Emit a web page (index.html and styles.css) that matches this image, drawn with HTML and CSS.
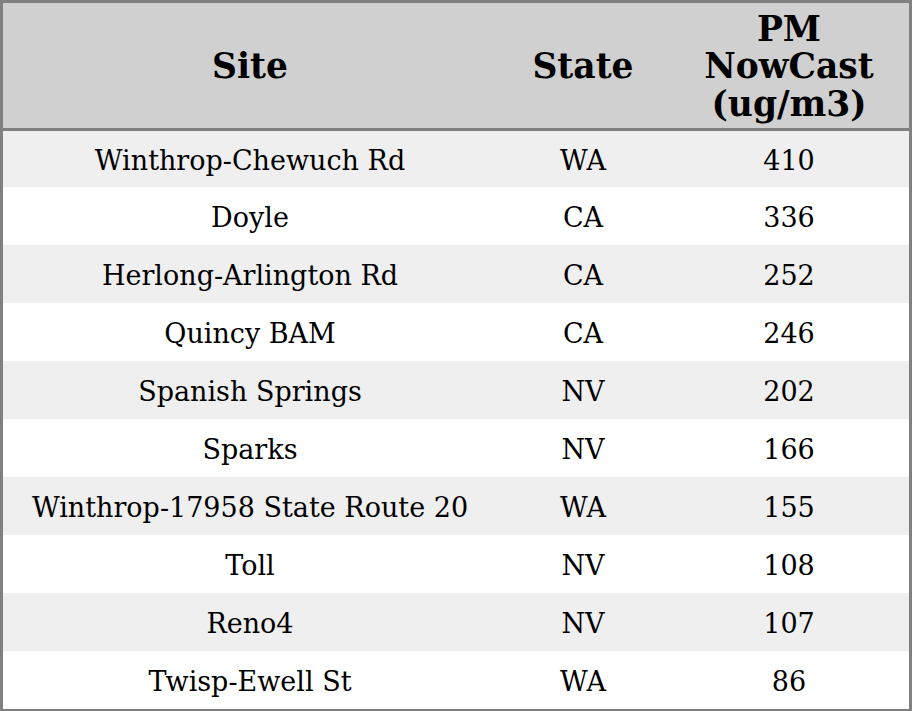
FILE: index.html
```html
<!DOCTYPE html>
<html>
<head>
<meta charset="utf-8">
<link rel="stylesheet" href="styles.css">
</head>
<body>
<table class="aq">
  <colgroup>
    <col class="c-site">
    <col class="c-state">
    <col class="c-pm">
  </colgroup>
  <thead>
    <tr><th>Site</th><th>State</th><th>PM<br>NowCast<br>(ug/m3)</th></tr>
  </thead>
  <tbody>
    <tr class="first"><td>Winthrop-Chewuch Rd</td><td>WA</td><td>410</td></tr>
    <tr><td>Doyle</td><td>CA</td><td>336</td></tr>
    <tr><td>Herlong-Arlington Rd</td><td>CA</td><td>252</td></tr>
    <tr><td>Quincy BAM</td><td>CA</td><td>246</td></tr>
    <tr><td>Spanish Springs</td><td>NV</td><td>202</td></tr>
    <tr><td>Sparks</td><td>NV</td><td>166</td></tr>
    <tr><td>Winthrop-17958 State Route 20</td><td>WA</td><td>155</td></tr>
    <tr><td>Toll</td><td>NV</td><td>108</td></tr>
    <tr><td>Reno4</td><td>NV</td><td>107</td></tr>
    <tr><td>Twisp-Ewell St</td><td>WA</td><td>86</td></tr>
  </tbody>
</table>
</body>
</html>
```
FILE: styles.css
```css
html, body {
  margin: 0;
  padding: 0;
  background: #ffffff;
}
.aq {
  width: 912px;
  border-collapse: separate;
  border-spacing: 0;
  border: 3px solid #808080;
  table-layout: fixed;
  font-family: "DejaVu Serif", serif;
  color: #000;
}
.c-site { width: 494px; }
.c-state { width: 172px; }
.c-pm { width: 240px; }
.aq th {
  background: #d0d0d0;
  font-weight: bold;
  font-size: 34.5px;
  line-height: 37.5px;
  height: 122px;
  padding: 3px 0 0;
  border-bottom: 3px solid #808080;
  text-align: center;
  vertical-align: middle;
}
.aq td {
  font-size: 27px;
  line-height: 32px;
  height: 54px;
  padding: 4px 0 0;
  text-align: center;
  vertical-align: middle;
}
.aq tbody tr.first td {
  height: 52px;
}
.aq tbody tr:nth-child(odd) td {
  background: #efefef;
}
```
